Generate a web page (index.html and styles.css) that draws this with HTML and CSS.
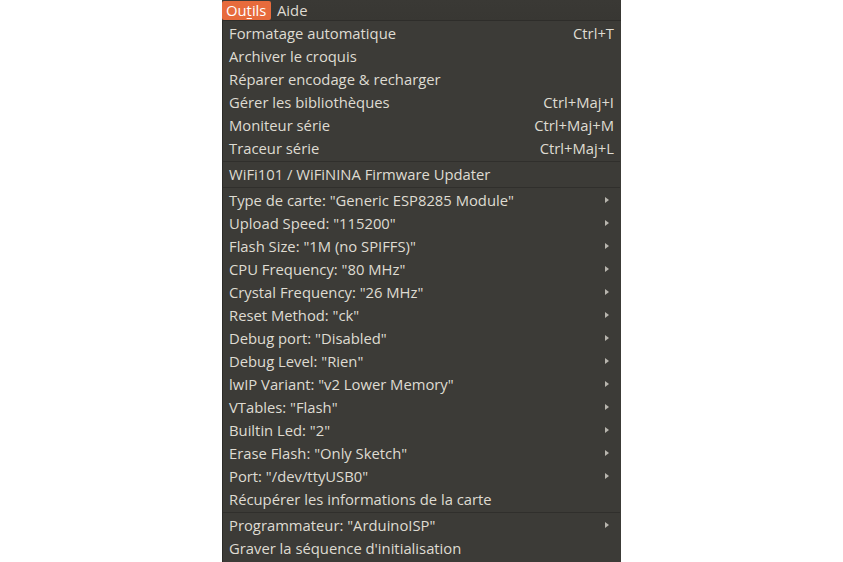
FILE: index.html
```html
<!DOCTYPE html>
<html lang="fr">
<head>
<meta charset="utf-8">
<link rel="stylesheet" href="styles.css">
</head>
<body>
<div class="page">
  <div class="window">
    <div class="menubar">
      <span class="top active">Ou<u>t</u>ils</span>
      <span class="top">Aide</span>
    </div>
    <div class="menu">
      <div class="item"><span class="label">Formatage automatique</span><span class="key">Ctrl+T</span></div>
      <div class="item"><span class="label">Archiver le croquis</span></div>
      <div class="item"><span class="label">Réparer encodage &amp; recharger</span></div>
      <div class="item"><span class="label">Gérer les bibliothèques</span><span class="key">Ctrl+Maj+I</span></div>
      <div class="item"><span class="label">Moniteur série</span><span class="key">Ctrl+Maj+M</span></div>
      <div class="item"><span class="label">Traceur série</span><span class="key">Ctrl+Maj+L</span></div>
      <div class="sep"></div>
      <div class="item"><span class="label">WiFi101 / WiFiNINA Firmware Updater</span></div>
      <div class="sep"></div>
      <div class="item sub"><span class="label">Type de carte: "Generic ESP8285 Module"</span><span class="arrow"></span></div>
      <div class="item sub"><span class="label">Upload Speed: "115200"</span><span class="arrow"></span></div>
      <div class="item sub"><span class="label">Flash Size: "1M (no SPIFFS)"</span><span class="arrow"></span></div>
      <div class="item sub"><span class="label">CPU Frequency: "80 MHz"</span><span class="arrow"></span></div>
      <div class="item sub"><span class="label">Crystal Frequency: "26 MHz"</span><span class="arrow"></span></div>
      <div class="item sub"><span class="label">Reset Method: "ck"</span><span class="arrow"></span></div>
      <div class="item sub"><span class="label">Debug port: "Disabled"</span><span class="arrow"></span></div>
      <div class="item sub"><span class="label">Debug Level: "Rien"</span><span class="arrow"></span></div>
      <div class="item sub"><span class="label">lwIP Variant: "v2 Lower Memory"</span><span class="arrow"></span></div>
      <div class="item sub"><span class="label">VTables: "Flash"</span><span class="arrow"></span></div>
      <div class="item sub"><span class="label">Builtin Led: "2"</span><span class="arrow"></span></div>
      <div class="item sub"><span class="label">Erase Flash: "Only Sketch"</span><span class="arrow"></span></div>
      <div class="item sub"><span class="label">Port: "/dev/ttyUSB0"</span><span class="arrow"></span></div>
      <div class="item"><span class="label">Récupérer les informations de la carte</span></div>
      <div class="sep"></div>
      <div class="item sub"><span class="label">Programmateur: "ArduinoISP"</span><span class="arrow"></span></div>
      <div class="item"><span class="label">Graver la séquence d'initialisation</span></div>
    </div>
  </div>
</div>
</body>
</html>
```

FILE: styles.css
```css
html, body {
  margin: 0;
  padding: 0;
  background: #ffffff;
}

.page {
  display: flex;
  padding-left: 222px;
  height: 562px;
  overflow: hidden;
}

.window {
  width: 399px;
  display: flex;
  flex-direction: column;
  font-family: "Open Sans", "Liberation Sans", sans-serif;
  font-size: 14.8px;
  color: #dfdbd2;
}

.menubar {
  height: 21px;
  display: flex;
  align-items: center;
  gap: 2px;
  background: linear-gradient(#3a3935, #383733);
  border-bottom: 1px solid #2e2d2a;
  box-sizing: border-box;
}

.top {
  height: 19px;
  display: flex;
  align-items: center;
  padding: 0 4px 1px;
  box-sizing: border-box;
  line-height: 18px;
  color: #dfdbd2;
}

.top.active {
  background: #e76b3c;
  color: #ffffff;
  border-radius: 2px;
  width: 49px;
}

.top u {
  text-decoration-thickness: 1px;
  text-underline-offset: 2px;
}

.menu {
  flex: 1;
  background: #3c3b37;
  border-left: 1px solid #2b2a27;
  padding-top: 1px;
  display: flex;
  flex-direction: column;
}

.item {
  height: 23px;
  box-sizing: border-box;
  display: flex;
  align-items: center;
  justify-content: space-between;
  padding: 0 7px 2px 6px;
  white-space: nowrap;
}

.key {
  color: #dfdbd2;
}

.arrow {
  width: 0;
  height: 0;
  border-top: 3px solid transparent;
  border-bottom: 3px solid transparent;
  border-left: 4px solid #b8b5ae;
  margin-right: 5px;
}

.sep {
  height: 3px;
  display: flex;
  flex-direction: column;
  justify-content: center;
}

.sep::before {
  content: "";
  display: block;
  height: 1px;
  margin: 0 1px 0 0;
  background: #302f2c;
}
```
